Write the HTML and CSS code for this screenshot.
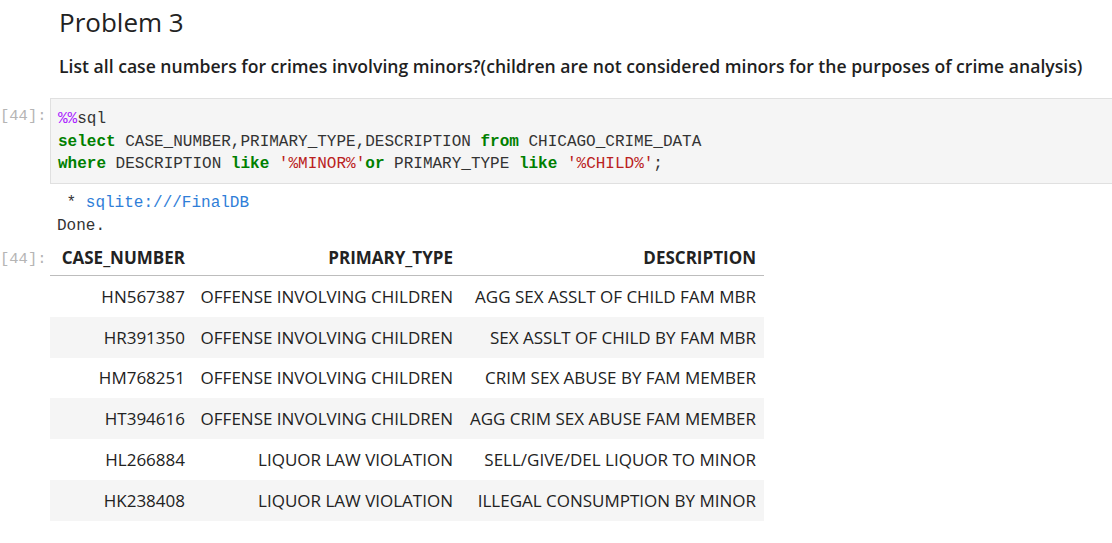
FILE: index.html
```html
<!DOCTYPE html>
<html>
<head>
<meta charset="utf-8">
<link rel="stylesheet" href="styles.css">
</head>
<body>
<div class="notebook">
  <div class="cell md-cell">
    <div class="prompt"></div>
    <div class="md">
      <h2 class="title">Problem 3</h2>
      <p class="question">List all case numbers for crimes involving minors?(children are not considered minors for the purposes of crime analysis)</p>
    </div>
  </div>

  <div class="cell code-cell">
    <div class="prompt">[44]:</div>
    <div class="editor"><pre class="code"><span class="magic">%%</span>sql
<span class="kw">select</span> CASE_NUMBER,PRIMARY_TYPE,DESCRIPTION <span class="kw">from</span> CHICAGO_CRIME_DATA
<span class="kw">where</span> DESCRIPTION <span class="kw">like</span> <span class="str">'%MINOR%'</span><span class="kw">or</span> PRIMARY_TYPE <span class="kw">like</span> <span class="str">'%CHILD%'</span>;</pre></div>
  </div>

  <div class="cell out-cell">
    <div class="prompt"></div>
    <pre class="stdout"> * <span class="link">sqlite:///FinalDB</span>
Done.</pre>
  </div>

  <div class="cell out-cell result">
    <div class="prompt out-prompt">[44]:</div>
    <table class="df">
      <colgroup>
        <col class="c1"><col class="c2"><col class="c3">
      </colgroup>
      <thead>
        <tr><th>CASE_NUMBER</th><th>PRIMARY_TYPE</th><th>DESCRIPTION</th></tr>
      </thead>
      <tbody>
        <tr><td>HN567387</td><td>OFFENSE INVOLVING CHILDREN</td><td>AGG SEX ASSLT OF CHILD FAM MBR</td></tr>
        <tr><td>HR391350</td><td>OFFENSE INVOLVING CHILDREN</td><td>SEX ASSLT OF CHILD BY FAM MBR</td></tr>
        <tr><td>HM768251</td><td>OFFENSE INVOLVING CHILDREN</td><td>CRIM SEX ABUSE BY FAM MEMBER</td></tr>
        <tr><td>HT394616</td><td>OFFENSE INVOLVING CHILDREN</td><td>AGG CRIM SEX ABUSE FAM MEMBER</td></tr>
        <tr><td>HL266884</td><td>LIQUOR LAW VIOLATION</td><td>SELL/GIVE/DEL LIQUOR TO MINOR</td></tr>
        <tr><td>HK238408</td><td>LIQUOR LAW VIOLATION</td><td>ILLEGAL CONSUMPTION BY MINOR</td></tr>
      </tbody>
    </table>
  </div>
</div>
</body>
</html>
```

FILE: styles.css
```css
html, body {
  margin: 0;
  padding: 0;
  background: #ffffff;
  overflow: hidden;
}
body {
  width: 1112px;
  height: 543px;
  font-family: "Open Sans", "Noto Sans", sans-serif;
  color: #212121;
}
.notebook {
  display: flex;
  flex-direction: column;
}
.cell {
  display: flex;
  flex-direction: row;
  align-items: flex-start;
}
.prompt {
  flex: 0 0 50px;
  width: 50px;
  box-sizing: border-box;
  padding-right: 9px;
  text-align: right;
  font-family: "Liberation Mono", monospace;
  font-size: 15.5px;
  color: #b5b5b5;
  white-space: pre;
  overflow: visible;
}
.md {
  padding-left: 9px;
}
.title {
  margin: 0;
  padding-top: 5px;
  font-size: 26px;
  font-weight: 500;
  line-height: 34px;
  color: #222222;
}
.question {
  margin: 15px 0 0 0;
  font-size: 17.6px;
  font-weight: 600;
  line-height: 24px;
  color: #1f1f1f;
}
.code-cell {
  margin-top: 20px;
}
.code-cell .prompt {
  padding-top: 9px;
}
.editor {
  flex: 0 0 1080px;
  background: #f5f5f5;
  border: 1px solid #e0e0e0;
  box-sizing: border-box;
  height: 86px;
  padding: 9px 0 0 7px;
}
.code {
  margin: 0;
  font-family: "Liberation Mono", monospace;
  font-size: 16px;
  line-height: 22.5px;
  color: #333333;
}
.magic { color: #aa22ff; }
.kw { color: #008000; font-weight: bold; }
.str { color: #ba2121; }
.stdout {
  margin: 0;
  padding: 8px 0 0 7px;
  font-family: "Liberation Mono", monospace;
  font-size: 16px;
  line-height: 22.5px;
  color: #333333;
}
.link { color: #2f7ed8; }
.result {
  margin-top: 8px;
}
.out-prompt {
  padding-top: 5px;
}
.df {
  border-collapse: collapse;
  table-layout: fixed;
  width: 714px;
  font-size: 17px;
  color: #222222;
}
.c1 { width: 143px; }
.c2 { width: 268px; }
.c3 { width: 303px; }
.df th, .df td {
  text-align: right;
  padding: 0 8px 0 0;
  white-space: nowrap;
}
.df th {
  font-weight: bold;
  height: 29px;
  vertical-align: top;
  padding-top: 1px;
  border-bottom: 1px solid #bdbdbd;
}
.df td {
  height: 40.8px;
  vertical-align: middle;
}
.df tbody tr:nth-child(even) td {
  background: #f5f5f5;
}
```
